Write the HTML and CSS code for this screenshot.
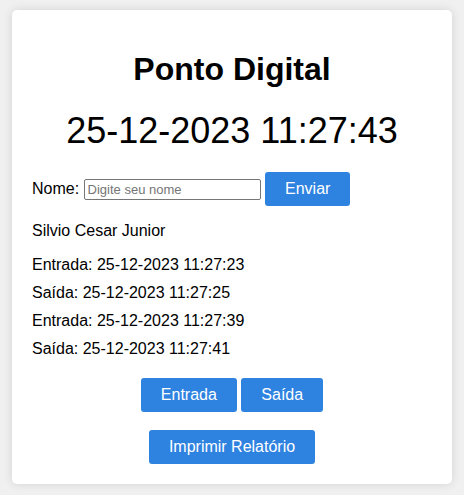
FILE: index.html
```html
<!DOCTYPE html>
<html lang="pt">
<head>
<meta charset="utf-8">
<title>Ponto Digital</title>
<link rel="stylesheet" href="styles.css">
</head>
<body>
<div class="container">
  <h1 class="title">Ponto Digital</h1>
  <p class="clock">25-12-2023 11:27:43</p>
  <div class="form-row">
    <label class="label" for="nome">Nome:</label> <input class="name-input" id="nome" type="text" placeholder="Digite seu nome"> <button class="btn">Enviar</button>
  </div>
  <p class="user-name">Silvio Cesar Junior</p>
  <div class="records">
    <p class="record">Entrada: 25-12-2023 11:27:23</p>
    <p class="record">Saída: 25-12-2023 11:27:25</p>
    <p class="record">Entrada: 25-12-2023 11:27:39</p>
    <p class="record">Saída: 25-12-2023 11:27:41</p>
  </div>
  <div class="actions">
    <button class="btn">Entrada</button> <button class="btn">Saída</button>
  </div>
  <div class="actions report">
    <button class="btn">Imprimir Relatório</button>
  </div>
</div>
</body>
</html>
```
FILE: styles.css
```css
html, body {
  margin: 0;
  padding: 0;
}
body {
  background: #f0f0f0;
  font-family: "Liberation Sans", Arial, sans-serif;
  font-size: 16px;
  color: #000;
  display: flex;
  justify-content: center;
  align-items: flex-start;
  height: 495px;
  box-sizing: border-box;
  padding-top: 10px;
}
.container {
  width: 400px;
  background: #fff;
  padding: 20px;
  border-radius: 5px;
  box-shadow: 0 0 10px rgba(0, 0, 0, 0.12);
}
.title {
  text-align: center;
  font-size: 32px;
  font-weight: bold;
  margin: 21px 0 0;
  line-height: 37px;
}
.clock {
  text-align: center;
  font-size: 36px;
  line-height: 41px;
  margin: 22px 0 0;
}
.form-row {
  margin-top: 21px;
  line-height: 18px;
}
.label {
  font-size: 16px;
}
.name-input {
  width: 177px;
  height: 21px;
  box-sizing: border-box;
  border: 1px solid #767676;
  border-radius: 2px;
  padding: 1px 3px;
  font-family: "Liberation Sans", Arial, sans-serif;
  font-size: 13px;
  vertical-align: baseline;
}
.name-input::placeholder {
  color: #757575;
}
.btn {
  background: #2e82e0;
  color: #fff;
  border: none;
  border-radius: 3px;
  padding: 8px 20px;
  font-family: "Liberation Sans", Arial, sans-serif;
  font-size: 16px;
  line-height: 18px;
  cursor: pointer;
}
.user-name {
  margin: 16px 0 0;
  line-height: 18px;
}
.records {
  margin-top: 16px;
}
.record {
  margin: 0 0 10px;
  line-height: 18px;
}
.record:last-child {
  margin-bottom: 0;
}
.actions {
  text-align: center;
  margin-top: 20px;
  font-size: 16px;
}
.actions.report {
  margin-top: 18px;
}
```
